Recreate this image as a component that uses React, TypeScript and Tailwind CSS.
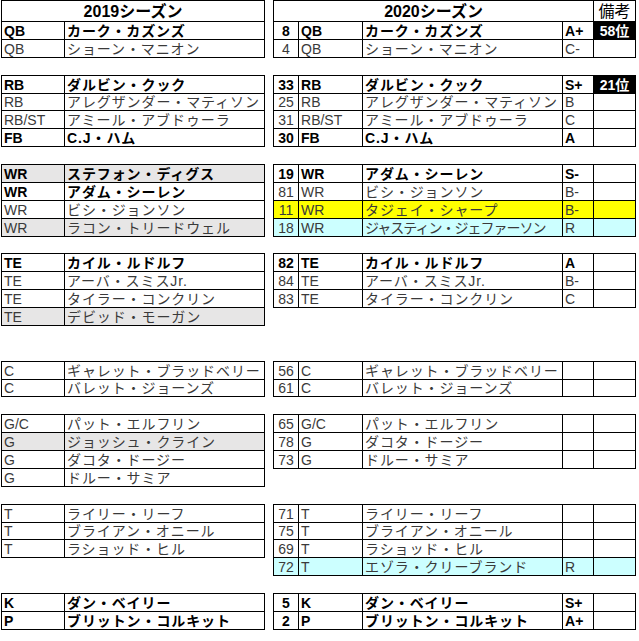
type Left = { pos: string; name: string; bold?: boolean; fill?: string };
type Right = {
  num: string;
  pos: string;
  name: string;
  grade?: string;
  remark?: string;
  bold?: boolean;
  fill?: string;
  tight?: boolean;
};
type Row = { l?: Left; r?: Right };

const GRAY = 'bg-[#e7e6e6]';
const YELLOW = 'bg-[#ffff00]';
const CYAN = 'bg-[#ccffff]';

const rows: Row[] = [
  {
    l: { pos: 'QB', name: 'カーク・カズンズ', bold: true },
    r: { num: '8', pos: 'QB', name: 'カーク・カズンズ', grade: 'A+', remark: '58位', bold: true },
  },
  {
    l: { pos: 'QB', name: 'ショーン・マニオン' },
    r: { num: '4', pos: 'QB', name: 'ショーン・マニオン', grade: 'C-' },
  },
  {},
  {
    l: { pos: 'RB', name: 'ダルビン・クック', bold: true },
    r: { num: '33', pos: 'RB', name: 'ダルビン・クック', grade: 'S+', remark: '21位', bold: true },
  },
  {
    l: { pos: 'RB', name: 'アレグザンダー・マティソン' },
    r: { num: '25', pos: 'RB', name: 'アレグザンダー・マティソン', grade: 'B' },
  },
  {
    l: { pos: 'RB/ST', name: 'アミール・アブドゥーラ' },
    r: { num: '31', pos: 'RB/ST', name: 'アミール・アブドゥーラ', grade: 'C' },
  },
  {
    l: { pos: 'FB', name: 'C.J・ハム', bold: true },
    r: { num: '30', pos: 'FB', name: 'C.J・ハム', grade: 'A', bold: true },
  },
  {},
  {
    l: { pos: 'WR', name: 'ステフォン・ディグス', bold: true, fill: GRAY },
    r: { num: '19', pos: 'WR', name: 'アダム・シーレン', grade: 'S-', bold: true },
  },
  {
    l: { pos: 'WR', name: 'アダム・シーレン', bold: true },
    r: { num: '81', pos: 'WR', name: 'ビシ・ジョンソン', grade: 'B-' },
  },
  {
    l: { pos: 'WR', name: 'ビシ・ジョンソン' },
    r: { num: '11', pos: 'WR', name: 'タジェイ・シャープ', grade: 'B-', fill: YELLOW },
  },
  {
    l: { pos: 'WR', name: 'ラコン・トリードウェル', fill: GRAY },
    r: { num: '18', pos: 'WR', name: 'ジャスティン・ジェファーソン', grade: 'R', fill: CYAN, tight: true },
  },
  {},
  {
    l: { pos: 'TE', name: 'カイル・ルドルフ', bold: true },
    r: { num: '82', pos: 'TE', name: 'カイル・ルドルフ', grade: 'A', bold: true },
  },
  {
    l: { pos: 'TE', name: 'アーバ・スミスJr.' },
    r: { num: '84', pos: 'TE', name: 'アーバ・スミスJr.', grade: 'B-' },
  },
  {
    l: { pos: 'TE', name: 'タイラー・コンクリン' },
    r: { num: '83', pos: 'TE', name: 'タイラー・コンクリン', grade: 'C' },
  },
  { l: { pos: 'TE', name: 'デビッド・モーガン', fill: GRAY } },
  {},
  {},
  {
    l: { pos: 'C', name: 'ギャレット・ブラッドベリー' },
    r: { num: '56', pos: 'C', name: 'ギャレット・ブラッドベリー' },
  },
  {
    l: { pos: 'C', name: 'バレット・ジョーンズ' },
    r: { num: '61', pos: 'C', name: 'バレット・ジョーンズ' },
  },
  {},
  {
    l: { pos: 'G/C', name: 'パット・エルフリン' },
    r: { num: '65', pos: 'G/C', name: 'パット・エルフリン' },
  },
  {
    l: { pos: 'G', name: 'ジョッシュ・クライン', fill: GRAY },
    r: { num: '78', pos: 'G', name: 'ダコタ・ドージー' },
  },
  {
    l: { pos: 'G', name: 'ダコタ・ドージー' },
    r: { num: '73', pos: 'G', name: 'ドルー・サミア' },
  },
  { l: { pos: 'G', name: 'ドルー・サミア' } },
  {},
  {
    l: { pos: 'T', name: 'ライリー・リーフ' },
    r: { num: '71', pos: 'T', name: 'ライリー・リーフ' },
  },
  {
    l: { pos: 'T', name: 'ブライアン・オニール' },
    r: { num: '75', pos: 'T', name: 'ブライアン・オニール' },
  },
  {
    l: { pos: 'T', name: 'ラショッド・ヒル' },
    r: { num: '69', pos: 'T', name: 'ラショッド・ヒル' },
  },
  { r: { num: '72', pos: 'T', name: 'エゾラ・クリーブランド', grade: 'R', fill: CYAN } },
  {},
  {
    l: { pos: 'K', name: 'ダン・ベイリー', bold: true },
    r: { num: '5', pos: 'K', name: 'ダン・ベイリー', grade: 'S+', bold: true },
  },
  {
    l: { pos: 'P', name: 'ブリットン・コルキット', bold: true },
    r: { num: '2', pos: 'P', name: 'ブリットン・コルキット', grade: 'A+', bold: true },
  },
];

const cell = 'border border-black px-[2px] align-bottom overflow-hidden whitespace-nowrap';

const App = () => {
  return (
    <div className="w-[639px] h-[641px] bg-white pl-[1px] font-['Liberation_Sans','Noto_Sans_CJK_JP',sans-serif] text-[14px] leading-[16px]">
      <table className="table-fixed border-collapse w-[634px]">
        <colgroup>
          <col className="w-[63px]" />
          <col className="w-[200px]" />
          <col className="w-[9px]" />
          <col className="w-[25px]" />
          <col className="w-[64px]" />
          <col className="w-[200px]" />
          <col className="w-[31px]" />
          <col className="w-[42px]" />
        </colgroup>
        <tbody>
          {/* Season headers */}
          <tr className="h-[21px]">
            <td colSpan={2} className="border border-black text-center font-bold text-[16px] leading-[18px] align-bottom">
              2019シーズン
            </td>
            <td />
            <td colSpan={4} className="border border-black text-center font-bold text-[16px] leading-[18px] align-bottom">
              2020シーズン
            </td>
            <td className="border border-black text-center text-[16px] leading-[18px] align-bottom">備考</td>
          </tr>
          {rows.map((row, i) => {
            const l = row.l;
            const r = row.r;
            const lText = l?.bold ? 'font-bold text-black' : 'text-[#3a3a3a]';
            const rText = r?.bold ? 'font-bold text-black' : 'text-[#3a3a3a]';
            return (
              <tr key={i} className="h-[17.88px]">
                {l ? (
                  <>
                    <td className={`${cell} ${lText} ${l.fill ?? ''}`}>{l.pos}</td>
                    <td className={`${cell} ${lText} ${l.fill ?? ''} tracking-[0.9px]`}>{l.name}</td>
                  </>
                ) : (
                  <>
                    <td />
                    <td />
                  </>
                )}
                <td />
                {r ? (
                  <>
                    <td className={`${cell} ${rText} ${r.fill ?? ''} text-center`}>{r.num}</td>
                    <td className={`${cell} ${rText} ${r.fill ?? ''}`}>{r.pos}</td>
                    <td
                      className={`${cell} ${rText} ${r.fill ?? ''} ${
                        r.tight ? 'tracking-[-1px]' : 'tracking-[0.9px]'
                      }`}
                    >
                      {r.name}
                    </td>
                    <td className={`${cell} ${rText} ${r.fill ?? ''}`}>{r.grade}</td>
                    <td
                      className={`${cell} ${
                        r.remark ? 'bg-black text-white font-bold text-center' : r.fill ?? ''
                      }`}
                    >
                      {r.remark}
                    </td>
                  </>
                ) : (
                  <>
                    <td />
                    <td />
                    <td />
                    <td />
                    <td />
                  </>
                )}
              </tr>
            );
          })}
        </tbody>
      </table>
    </div>
  );
};

export default App;
